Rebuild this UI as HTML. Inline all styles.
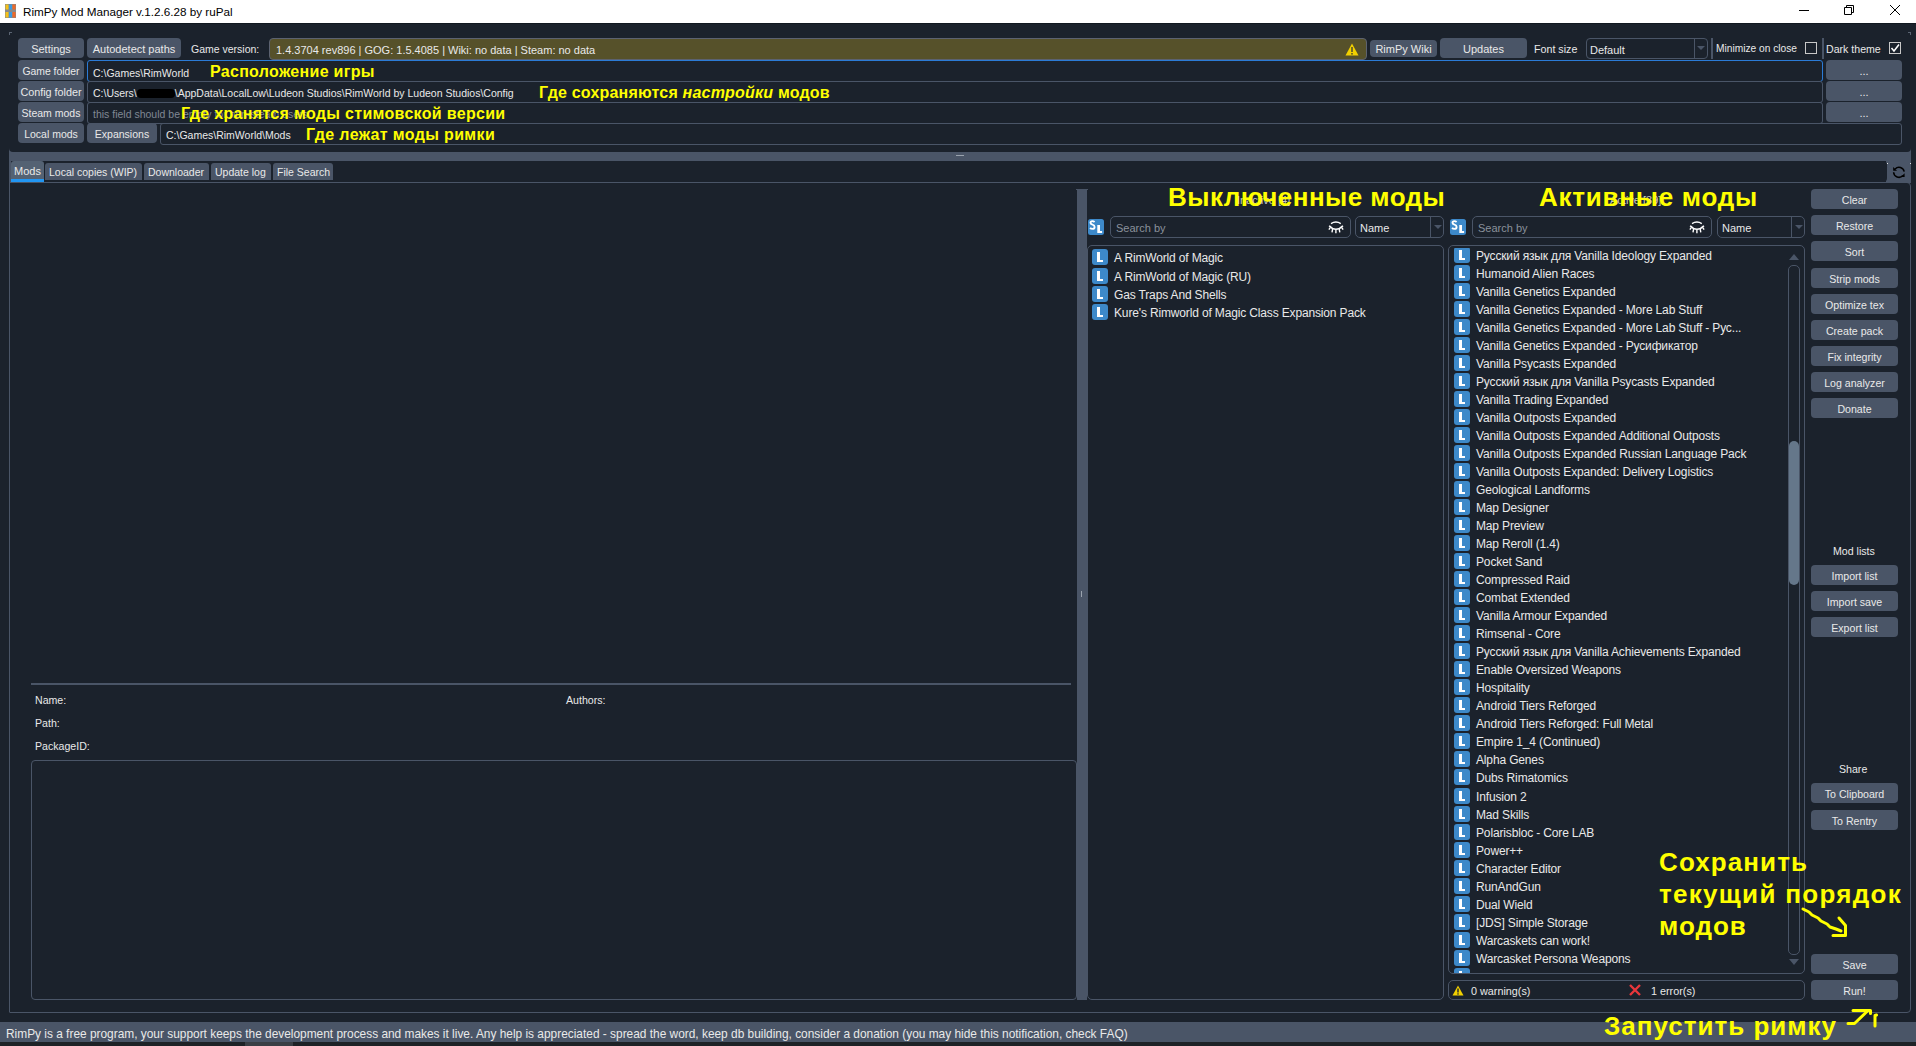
<!DOCTYPE html><html><head><meta charset="utf-8"><style>
*{box-sizing:border-box;margin:0;padding:0}
html,body{width:1916px;height:1046px;overflow:hidden;background:#1b222c;font-family:"Liberation Sans",sans-serif;color:#e9e9e9;}
.a{position:absolute}
.btn{position:absolute;background:#4a5567;border-radius:4px;color:#e9e9e9;font-size:11px;text-align:center;white-space:nowrap}
.lbl{position:absolute;font-size:11px;color:#e9e9e9;white-space:nowrap;line-height:1}
.inp{position:absolute;border:1px solid #4a5567;border-radius:3px;}
.txt{position:absolute;white-space:nowrap;line-height:1}
.ic{position:absolute;width:16px;height:16px;background:#3d89c9;border-radius:3px}
.ic:before{content:"";position:absolute;left:5px;top:3px;width:3px;height:10px;background:#fff}
.ic:after{content:"";position:absolute;left:5px;top:11px;width:6px;height:2px;background:#fff}
.li{position:absolute;font-size:12px;letter-spacing:-0.15px;white-space:nowrap;line-height:1}
.ann{position:absolute;font-weight:bold;color:#ffff00;white-space:nowrap;line-height:1}
</style></head><body><div class="a" style="left:0;top:0;width:1916px;height:23px;background:#fff"></div>
<div class="a" style="left:0;top:23px;width:1916px;height:1px;background:#111820"></div>
<svg class="a" style="left:5px;top:4px" width="11" height="14" viewBox="0 0 11 14">
<rect x="0" y="0" width="11" height="14" fill="#8a8a8a"/>
<rect x="0.5" y="0.5" width="3" height="5" fill="#f4c21a"/><rect x="4" y="0.5" width="3" height="5" fill="#3d9be0"/><rect x="7.5" y="0.5" width="3" height="5" fill="#ee6a2a"/>
<rect x="0.5" y="8" width="3" height="5.5" fill="#f4c21a"/><rect x="4" y="8" width="3" height="5.5" fill="#3d9be0"/><rect x="7.5" y="8" width="3" height="5.5" fill="#ee6a2a"/>
</svg>
<div class="txt" style="left:23px;top:6px;font-size:11.7px;color:#000">RimPy Mod Manager v.1.2.6.28 by ruPal</div>
<div class="a" style="left:1799px;top:10px;width:10px;height:1px;background:#000"></div>
<svg class="a" style="left:1843px;top:4px" width="12" height="12" viewBox="0 0 12 12"><path d="M1.5 3.5h7v7h-7z M3.5 3.5v-2h7v7h-2" fill="none" stroke="#000" stroke-width="1"/></svg>
<svg class="a" style="left:1889px;top:4px" width="12" height="12" viewBox="0 0 12 12"><path d="M1 1L11 11M11 1L1 11" stroke="#000" stroke-width="1"/></svg>
<div class="a" style="left:9px;top:148px;width:1902px;height:13px;background:#4a5567"></div>
<div class="a" style="left:9px;top:32px;width:1902px;height:120px;background:#1b222c;border-radius:0 0 4px 4px"></div>
<div class="btn" style="left:18px;top:38px;width:66px;height:20px;line-height:22px;font-size:11px;">Settings</div>
<div class="btn" style="left:87px;top:38px;width:94px;height:20px;line-height:22px;font-size:11px;">Autodetect paths</div>
<div class="lbl" style="left:191px;top:44px;font-size:10.5px">Game version:</div>
<div class="a" style="left:269px;top:38px;width:1098px;height:22px;background:#56512a;border:1px solid #5c6270;border-radius:4px"></div>
<div class="lbl" style="left:276px;top:45px">1.4.3704 rev896 | GOG: 1.5.4085 | Wiki: no data | Steam: no data</div>
<svg class="a" style="left:1345px;top:43px" width="14" height="13" viewBox="0 0 14 13"><path d="M7 0.5L13.5 12.5H0.5Z" fill="#f2d000"/><rect x="6.2" y="4" width="1.6" height="5" fill="#56512a"/><rect x="6.2" y="10" width="1.6" height="1.6" fill="#56512a"/></svg>
<div class="btn" style="left:1370px;top:40px;width:67px;height:17px;line-height:19px;font-size:11px;">RimPy Wiki</div>
<div class="btn" style="left:1440px;top:38px;width:87px;height:20px;line-height:22px;font-size:11px;">Updates</div>
<div class="lbl" style="left:1534px;top:44px;font-size:10.7px">Font size</div>
<div class="inp" style="left:1586px;top:38px;width:122px;height:21px;border-radius:4px"></div>
<div class="a" style="left:1694px;top:39px;width:1px;height:19px;background:#4a5567"></div>
<div class="lbl" style="left:1590px;top:45px">Default</div>
<svg class="a" style="left:1697px;top:46px" width="8" height="5"><path d="M0 0H8L4 4Z" fill="#4a5567"/></svg>
<div class="a" style="left:1711px;top:38px;width:2px;height:21px;background:#4a5567"></div>
<div class="lbl" style="left:1716px;top:44px;font-size:10.2px">Minimize on close</div>
<div class="a" style="left:1805px;top:42px;width:12px;height:12px;border:1px solid #c8c8c8"></div>
<div class="a" style="left:1822px;top:38px;width:2px;height:21px;background:#4a5567"></div>
<div class="lbl" style="left:1826px;top:44px;font-size:10.6px">Dark theme</div>
<div class="a" style="left:1889px;top:42px;width:12px;height:12px;border:1px solid #c8c8c8"></div>
<svg class="a" style="left:1889px;top:42px" width="12" height="12"><path d="M2.5 6L5 9L10 2.5" fill="none" stroke="#fff" stroke-width="1.5"/></svg>
<div class="btn" style="left:18px;top:60px;width:66px;height:20px;line-height:22px;font-size:10.4px;line-height:24px">Game folder</div>
<div class="inp" style="left:87px;top:60px;width:1736px;height:22px;border-color:#2b7bd6"></div>
<div class="lbl" style="left:93px;top:68px;font-size:10.5px">C:\Games\RimWorld</div>
<div class="btn" style="left:1826px;top:60px;width:76px;height:20px;line-height:22px;font-size:11px;">...</div>
<div class="btn" style="left:18px;top:81px;width:66px;height:20px;line-height:22px;font-size:10.8px;">Config folder</div>
<div class="inp" style="left:87px;top:81px;width:1736px;height:22px;background:#1b222c"></div>
<div class="lbl" style="left:93px;top:88px;font-size:10.5px">C:\Users\<span style="display:inline-block;width:38px;height:9px;background:#000;border-radius:4px;vertical-align:-1px"></span>\AppData\LocalLow\Ludeon Studios\RimWorld by Ludeon Studios\Config</div>
<div class="btn" style="left:1826px;top:81px;width:76px;height:20px;line-height:22px;font-size:11px;">...</div>
<div class="btn" style="left:18px;top:102px;width:66px;height:20px;line-height:22px;font-size:10.5px;">Steam mods</div>
<div class="inp" style="left:87px;top:102px;width:1736px;height:22px;background:#1b222c"></div>
<div class="lbl" style="left:93px;top:109px;font-size:10.5px;color:#808894">this field should be empty for non-steam users</div>
<div class="btn" style="left:1826px;top:102px;width:76px;height:20px;line-height:22px;font-size:11px;">...</div>
<div class="btn" style="left:18px;top:123px;width:66px;height:20px;line-height:22px;font-size:10.5px;">Local mods</div>
<div class="btn" style="left:87px;top:123px;width:70px;height:20px;line-height:22px;font-size:10.5px;">Expansions</div>
<div class="inp" style="left:160px;top:123px;width:1742px;height:22px"></div>
<div class="lbl" style="left:166px;top:130px;font-size:10.5px">C:\Games\RimWorld\Mods</div>
<div class="a" style="left:9px;top:32px;width:3px;height:1px;background:#5a6472"></div><div class="a" style="left:9px;top:32px;width:1px;height:3px;background:#5a6472"></div>
<div class="a" style="left:1908px;top:32px;width:3px;height:1px;background:#5a6472"></div><div class="a" style="left:1910px;top:32px;width:1px;height:3px;background:#5a6472"></div>
<div class="a" style="left:956px;top:155px;width:8px;height:1px;background:#9aa3ae"></div>
<div class="a" style="left:9px;top:161px;width:2px;height:22px;background:#4a5567"></div>
<div class="a" style="left:1886px;top:161px;width:25px;height:22px;background:#4a5567"></div>
<div class="a" style="left:1870px;top:161px;width:17px;height:21px;background:#1b222c;border-radius:0 4px 4px 0"></div>
<svg class="a" style="left:1891px;top:164px" width="16" height="16" viewBox="0 0 16 16"><path d="M4.2 5A5.3 5.3 0 0 1 13.2 7.6M2.6 8.3A5.3 5.3 0 0 0 11.8 11.6" fill="none" stroke="#000" stroke-width="1.5"/><path d="M2.2 3V6.8H6Z M13.6 9.2V13H9.9Z" fill="#000"/></svg>
<div class="a" style="left:1887px;top:163px;width:1px;height:1px;background:#e0e0e0"></div><div class="a" style="left:1910px;top:163px;width:1px;height:1px;background:#e0e0e0"></div>
<div class="a" style="left:11px;top:161px;width:33px;height:21px;background:#546273;border-radius:3px 3px 0 0"></div>
<div class="a" style="left:11px;top:179px;width:33px;height:3px;background:#2196f3"></div>
<div class="lbl" style="left:14px;top:166px;font-size:11px">Mods</div>
<div class="a" style="left:45px;top:163px;width:97px;height:17px;background:#4a5567;border-radius:3px 3px 0 0"></div>
<div class="lbl" style="left:49px;top:167px;font-size:10.5px">Local copies (WIP)</div>
<div class="a" style="left:144px;top:163px;width:65px;height:17px;background:#4a5567;border-radius:3px 3px 0 0"></div>
<div class="lbl" style="left:148px;top:167px;font-size:10.5px">Downloader</div>
<div class="a" style="left:211px;top:163px;width:60px;height:17px;background:#4a5567;border-radius:3px 3px 0 0"></div>
<div class="lbl" style="left:215px;top:167px;font-size:10.5px">Update log</div>
<div class="a" style="left:273px;top:163px;width:60px;height:17px;background:#4a5567;border-radius:3px 3px 0 0"></div>
<div class="lbl" style="left:277px;top:167px;font-size:10.5px">File Search</div>
<div class="a" style="left:9px;top:182px;width:1902px;height:831px;border:1px solid #4a5567;border-top-color:#4a5567;border-radius:0 4px 4px 1px"></div>
<div class="a" style="left:31px;top:683px;width:1040px;height:2px;background:#4a5567"></div>
<div class="lbl" style="left:35px;top:695px;font-size:10.6px">Name:</div>
<div class="lbl" style="left:566px;top:695px;font-size:10.6px">Authors:</div>
<div class="lbl" style="left:35px;top:718px;font-size:10.6px">Path:</div>
<div class="lbl" style="left:35px;top:741px;font-size:10.6px">PackageID:</div>
<div class="inp" style="left:31px;top:760px;width:1046px;height:240px;border-radius:4px"></div>
<div class="a" style="left:1077px;top:189px;width:10px;height:811px;background:#4a5567"></div>
<div class="a" style="left:1081px;top:591px;width:1px;height:6px;background:#9aa3ae"></div>
<div class="a" style="left:1076px;top:189px;width:12px;height:1px;background:#4a5567"></div>
<div class="lbl" style="left:1237px;top:195px;font-size:11px;color:#c8c8c8">Inactive [4]</div>
<svg class="a" style="left:1088px;top:219px" width="16" height="16" viewBox="0 0 16 16"><rect width="16" height="16" rx="2.5" fill="#3d89c9"/><path d="M6.6 2.9Q5.6 2.1 4.4 2.1Q2.5 2.1 2.5 3.8Q2.5 5.1 4.5 5.7Q6.6 6.3 6.6 8Q6.6 9.9 4.4 9.9Q3 9.9 2 9" fill="none" stroke="#fff" stroke-width="1.9"/><path d="M9.3 6H12V12H14.1V14H9.3Z" fill="#fff"/></svg>
<div class="inp" style="left:1110px;top:216px;width:241px;height:22px;border-radius:5px"></div>
<div class="lbl" style="left:1116px;top:223px;font-size:11px;color:#8a919b">Search by</div>
<svg class="a" style="left:1328px;top:220px" width="17" height="15" viewBox="0 0 17 15"><path d="M3 3.6Q7.9 0.4 12.8 3.6" fill="none" stroke="#fff" stroke-width="1.3"/><path d="M1.2 5.7Q7.9 12.9 14.9 5.7" fill="none" stroke="#fff" stroke-width="1.6"/><path d="M2.2 7.6L0.9 9.6M4.6 9L4 12.3M7.9 9.8V13.3M11.2 9L11.8 12.3M13.8 7.6L15.1 9.6" stroke="#fff" stroke-width="1.4"/></svg>
<div class="inp" style="left:1355px;top:216px;width:89px;height:22px;border-radius:5px"></div>
<div class="a" style="left:1430px;top:217px;width:1px;height:20px;background:#4a5567"></div>
<div class="lbl" style="left:1360px;top:223px">Name</div>
<svg class="a" style="left:1434px;top:225px" width="8" height="5"><path d="M0 0H8L4 4Z" fill="#4a5567"/></svg>
<div class="inp" style="left:1087px;top:245px;width:357px;height:755px;border-radius:5px"></div>
<div class="ic" style="left:1092px;top:249px"></div>
<div class="li" style="left:1114px;top:252px">A RimWorld of Magic</div>
<div class="ic" style="left:1092px;top:268px"></div>
<div class="li" style="left:1114px;top:271px">A RimWorld of Magic (RU)</div>
<div class="ic" style="left:1092px;top:286px"></div>
<div class="li" style="left:1114px;top:289px">Gas Traps And Shells</div>
<div class="ic" style="left:1092px;top:304px"></div>
<div class="li" style="left:1114px;top:307px">Kure's Rimworld of Magic Class Expansion Pack</div>
<div class="lbl" style="left:1610px;top:195px;font-size:11px;color:#c8c8c8">Active [39]</div>
<svg class="a" style="left:1450px;top:219px" width="16" height="16" viewBox="0 0 16 16"><rect width="16" height="16" rx="2.5" fill="#3d89c9"/><path d="M6.6 2.9Q5.6 2.1 4.4 2.1Q2.5 2.1 2.5 3.8Q2.5 5.1 4.5 5.7Q6.6 6.3 6.6 8Q6.6 9.9 4.4 9.9Q3 9.9 2 9" fill="none" stroke="#fff" stroke-width="1.9"/><path d="M9.3 6H12V12H14.1V14H9.3Z" fill="#fff"/></svg>
<div class="inp" style="left:1472px;top:216px;width:240px;height:22px;border-radius:5px"></div>
<div class="lbl" style="left:1478px;top:223px;font-size:11px;color:#8a919b">Search by</div>
<svg class="a" style="left:1689px;top:220px" width="17" height="15" viewBox="0 0 17 15"><path d="M3 3.6Q7.9 0.4 12.8 3.6" fill="none" stroke="#fff" stroke-width="1.3"/><path d="M1.2 5.7Q7.9 12.9 14.9 5.7" fill="none" stroke="#fff" stroke-width="1.6"/><path d="M2.2 7.6L0.9 9.6M4.6 9L4 12.3M7.9 9.8V13.3M11.2 9L11.8 12.3M13.8 7.6L15.1 9.6" stroke="#fff" stroke-width="1.4"/></svg>
<div class="inp" style="left:1717px;top:216px;width:88px;height:22px;border-radius:5px"></div>
<div class="a" style="left:1791px;top:217px;width:1px;height:20px;background:#4a5567"></div>
<div class="lbl" style="left:1722px;top:223px">Name</div>
<svg class="a" style="left:1795px;top:225px" width="8" height="5"><path d="M0 0H8L4 4Z" fill="#4a5567"/></svg>
<div class="inp" style="left:1448px;top:245px;width:357px;height:729px;border-radius:5px"></div>
<div class="a" style="left:1449px;top:248px;width:338px;height:725px;overflow:hidden"><div class="ic" style="left:5px;top:-1px"></div><div class="li" style="left:27px;top:2px">Русский язык для Vanilla Ideology Expanded</div><div class="ic" style="left:5px;top:17px"></div><div class="li" style="left:27px;top:20px">Humanoid Alien Races</div><div class="ic" style="left:5px;top:35px"></div><div class="li" style="left:27px;top:38px">Vanilla Genetics Expanded</div><div class="ic" style="left:5px;top:53px"></div><div class="li" style="left:27px;top:56px">Vanilla Genetics Expanded - More Lab Stuff</div><div class="ic" style="left:5px;top:71px"></div><div class="li" style="left:27px;top:74px">Vanilla Genetics Expanded - More Lab Stuff - Рус...</div><div class="ic" style="left:5px;top:89px"></div><div class="li" style="left:27px;top:92px">Vanilla Genetics Expanded - Русификатор</div><div class="ic" style="left:5px;top:107px"></div><div class="li" style="left:27px;top:110px">Vanilla Psycasts Expanded</div><div class="ic" style="left:5px;top:125px"></div><div class="li" style="left:27px;top:128px">Русский язык для Vanilla Psycasts Expanded</div><div class="ic" style="left:5px;top:143px"></div><div class="li" style="left:27px;top:146px">Vanilla Trading Expanded</div><div class="ic" style="left:5px;top:161px"></div><div class="li" style="left:27px;top:164px">Vanilla Outposts Expanded</div><div class="ic" style="left:5px;top:179px"></div><div class="li" style="left:27px;top:182px">Vanilla Outposts Expanded Additional Outposts</div><div class="ic" style="left:5px;top:197px"></div><div class="li" style="left:27px;top:200px">Vanilla Outposts Expanded Russian Language Pack</div><div class="ic" style="left:5px;top:215px"></div><div class="li" style="left:27px;top:218px">Vanilla Outposts Expanded: Delivery Logistics</div><div class="ic" style="left:5px;top:233px"></div><div class="li" style="left:27px;top:236px">Geological Landforms</div><div class="ic" style="left:5px;top:251px"></div><div class="li" style="left:27px;top:254px">Map Designer</div><div class="ic" style="left:5px;top:269px"></div><div class="li" style="left:27px;top:272px">Map Preview</div><div class="ic" style="left:5px;top:287px"></div><div class="li" style="left:27px;top:290px">Map Reroll (1.4)</div><div class="ic" style="left:5px;top:305px"></div><div class="li" style="left:27px;top:308px">Pocket Sand</div><div class="ic" style="left:5px;top:323px"></div><div class="li" style="left:27px;top:326px">Compressed Raid</div><div class="ic" style="left:5px;top:341px"></div><div class="li" style="left:27px;top:344px">Combat Extended</div><div class="ic" style="left:5px;top:359px"></div><div class="li" style="left:27px;top:362px">Vanilla Armour Expanded</div><div class="ic" style="left:5px;top:377px"></div><div class="li" style="left:27px;top:380px">Rimsenal - Core</div><div class="ic" style="left:5px;top:395px"></div><div class="li" style="left:27px;top:398px">Русский язык для Vanilla Achievements Expanded</div><div class="ic" style="left:5px;top:413px"></div><div class="li" style="left:27px;top:416px">Enable Oversized Weapons</div><div class="ic" style="left:5px;top:431px"></div><div class="li" style="left:27px;top:434px">Hospitality</div><div class="ic" style="left:5px;top:449px"></div><div class="li" style="left:27px;top:452px">Android Tiers Reforged</div><div class="ic" style="left:5px;top:467px"></div><div class="li" style="left:27px;top:470px">Android Tiers Reforged: Full Metal</div><div class="ic" style="left:5px;top:485px"></div><div class="li" style="left:27px;top:488px">Empire 1_4 (Continued)</div><div class="ic" style="left:5px;top:503px"></div><div class="li" style="left:27px;top:506px">Alpha Genes</div><div class="ic" style="left:5px;top:521px"></div><div class="li" style="left:27px;top:524px">Dubs Rimatomics</div><div class="ic" style="left:5px;top:540px"></div><div class="li" style="left:27px;top:543px">Infusion 2</div><div class="ic" style="left:5px;top:558px"></div><div class="li" style="left:27px;top:561px">Mad Skills</div><div class="ic" style="left:5px;top:576px"></div><div class="li" style="left:27px;top:579px">Polarisbloc - Core LAB</div><div class="ic" style="left:5px;top:594px"></div><div class="li" style="left:27px;top:597px">Power++</div><div class="ic" style="left:5px;top:612px"></div><div class="li" style="left:27px;top:615px">Character Editor</div><div class="ic" style="left:5px;top:630px"></div><div class="li" style="left:27px;top:633px">RunAndGun</div><div class="ic" style="left:5px;top:648px"></div><div class="li" style="left:27px;top:651px">Dual Wield</div><div class="ic" style="left:5px;top:666px"></div><div class="li" style="left:27px;top:669px">[JDS] Simple Storage</div><div class="ic" style="left:5px;top:684px"></div><div class="li" style="left:27px;top:687px">Warcaskets can work!</div><div class="ic" style="left:5px;top:702px"></div><div class="li" style="left:27px;top:705px">Warcasket Persona Weapons</div><div class="ic" style="left:5px;top:720px"></div></div>
<svg class="a" style="left:1789px;top:254px" width="10" height="6"><path d="M0 6H10L5 0Z" fill="#4a5567"/></svg>
<div class="a" style="left:1788px;top:265px;width:12px;height:690px;border:1px solid #4a5567;border-radius:5px"></div>
<div class="a" style="left:1789px;top:441px;width:10px;height:144px;background:#65778a;border-radius:5px"></div>
<svg class="a" style="left:1789px;top:959px" width="10" height="6"><path d="M0 0H10L5 6Z" fill="#4a5567"/></svg>
<div class="inp" style="left:1448px;top:980px;width:357px;height:20px;border-radius:5px"></div>
<svg class="a" style="left:1452px;top:985px" width="12" height="11" viewBox="0 0 12 11"><path d="M6 0.5L11.5 10.5H0.5Z" fill="#f2d000"/><rect x="5.3" y="3.5" width="1.4" height="4" fill="#1b222c"/><rect x="5.3" y="8.3" width="1.4" height="1.3" fill="#1b222c"/></svg>
<div class="lbl" style="left:1471px;top:986px;font-size:10.8px">0 warning(s)</div>
<svg class="a" style="left:1629px;top:984px" width="12" height="12" viewBox="0 0 12 12"><path d="M1 1L11 11M11 1L1 11" stroke="#e8363b" stroke-width="2.4"/></svg>
<div class="lbl" style="left:1651px;top:986px;font-size:10.8px">1 error(s)</div>
<div class="btn" style="left:1811px;top:189px;width:87px;height:20px;line-height:22px;font-size:10.6px;">Clear</div>
<div class="btn" style="left:1811px;top:215px;width:87px;height:20px;line-height:22px;font-size:10.6px;">Restore</div>
<div class="btn" style="left:1811px;top:241px;width:87px;height:20px;line-height:22px;font-size:10.6px;">Sort</div>
<div class="btn" style="left:1811px;top:268px;width:87px;height:20px;line-height:22px;font-size:10.6px;">Strip mods</div>
<div class="btn" style="left:1811px;top:294px;width:87px;height:20px;line-height:22px;font-size:10.6px;">Optimize tex</div>
<div class="btn" style="left:1811px;top:320px;width:87px;height:20px;line-height:22px;font-size:10.6px;">Create pack</div>
<div class="btn" style="left:1811px;top:346px;width:87px;height:20px;line-height:22px;font-size:10.6px;">Fix integrity</div>
<div class="btn" style="left:1811px;top:372px;width:87px;height:20px;line-height:22px;font-size:10.6px;">Log analyzer</div>
<div class="btn" style="left:1811px;top:398px;width:87px;height:20px;line-height:22px;font-size:10.6px;">Donate</div>
<div class="lbl" style="left:1833px;top:546px;font-size:10.6px">Mod lists</div>
<div class="btn" style="left:1811px;top:565px;width:87px;height:20px;line-height:22px;font-size:10.6px;">Import list</div>
<div class="btn" style="left:1811px;top:591px;width:87px;height:20px;line-height:22px;font-size:10.6px;">Import save</div>
<div class="btn" style="left:1811px;top:617px;width:87px;height:20px;line-height:22px;font-size:10.6px;">Export list</div>
<div class="lbl" style="left:1839px;top:764px;font-size:10.6px">Share</div>
<div class="btn" style="left:1811px;top:783px;width:87px;height:20px;line-height:22px;font-size:10.6px;">To Clipboard</div>
<div class="btn" style="left:1811px;top:810px;width:87px;height:20px;line-height:22px;font-size:10.6px;">To Rentry</div>
<div class="btn" style="left:1811px;top:954px;width:87px;height:20px;line-height:22px;font-size:10.6px;">Save</div>
<div class="btn" style="left:1811px;top:980px;width:87px;height:20px;line-height:22px;font-size:10.6px;">Run!</div>
<div class="a" style="left:0;top:1022px;width:1916px;height:20px;background:#4a5567"></div>
<div class="lbl" style="left:6px;top:1029px;font-size:11.9px">RimPy is a free program, your support keeps the development process and makes it live. Any help is appreciated - spread the word, keep db building, consider a donation (you may hide this notification, check FAQ)</div>
<div class="a" style="left:0;top:1042px;width:1916px;height:4px;background:#1e2226"></div>
<div class="a" style="left:245px;top:1042px;width:48px;height:4px;background:#3a3f45"></div>
<div class="ann" style="left:210px;top:64px;font-size:16px;letter-spacing:0.3px">Расположение игры</div>
<div class="ann" style="left:539px;top:85px;font-size:16px;letter-spacing:0.2px">Где сохраняются <i>настройки</i> модов</div>
<div class="ann" style="left:181px;top:106px;font-size:16px;letter-spacing:0.32px">Где хранятся моды стимовской версии</div>
<div class="ann" style="left:306px;top:127px;font-size:16px;letter-spacing:0.35px">Где лежат моды римки</div>
<div class="ann" style="left:1168px;top:184px;font-size:26px;letter-spacing:0.45px">Выключенные моды</div>
<div class="ann" style="left:1539px;top:184px;font-size:26px;letter-spacing:0.75px">Активные моды</div>
<div class="ann" style="left:1659px;top:846px;font-size:26px;line-height:32px;letter-spacing:1.1px">Сохранить</div><div class="ann" style="left:1659px;top:878px;font-size:26px;line-height:32px;letter-spacing:1.3px">текущий порядок</div><div class="ann" style="left:1659px;top:910px;font-size:26px;line-height:32px;letter-spacing:1px">модов</div>
<div class="ann" style="left:1604px;top:1013px;font-size:26px;letter-spacing:1px">Запустить римку</div>
<svg class="a" style="left:0;top:0" width="1916" height="1046"><g fill="none" stroke="#ffff00" stroke-width="3" stroke-linecap="round" stroke-linejoin="round">
<path d="M1803 909L1809 912L1812 915L1818 918L1821 921L1827 924L1830 927L1836 929L1841 931"/><path d="M1839 918L1845.5 925.5V935.5H1833"/>
<path d="M1848 1023.5H1854.5L1867 1011.5"/><path d="M1853 1010.5H1870.5V1013.5"/><path d="M1875 1026V1015.5L1876.5 1015"/>
</g></svg></body></html>
